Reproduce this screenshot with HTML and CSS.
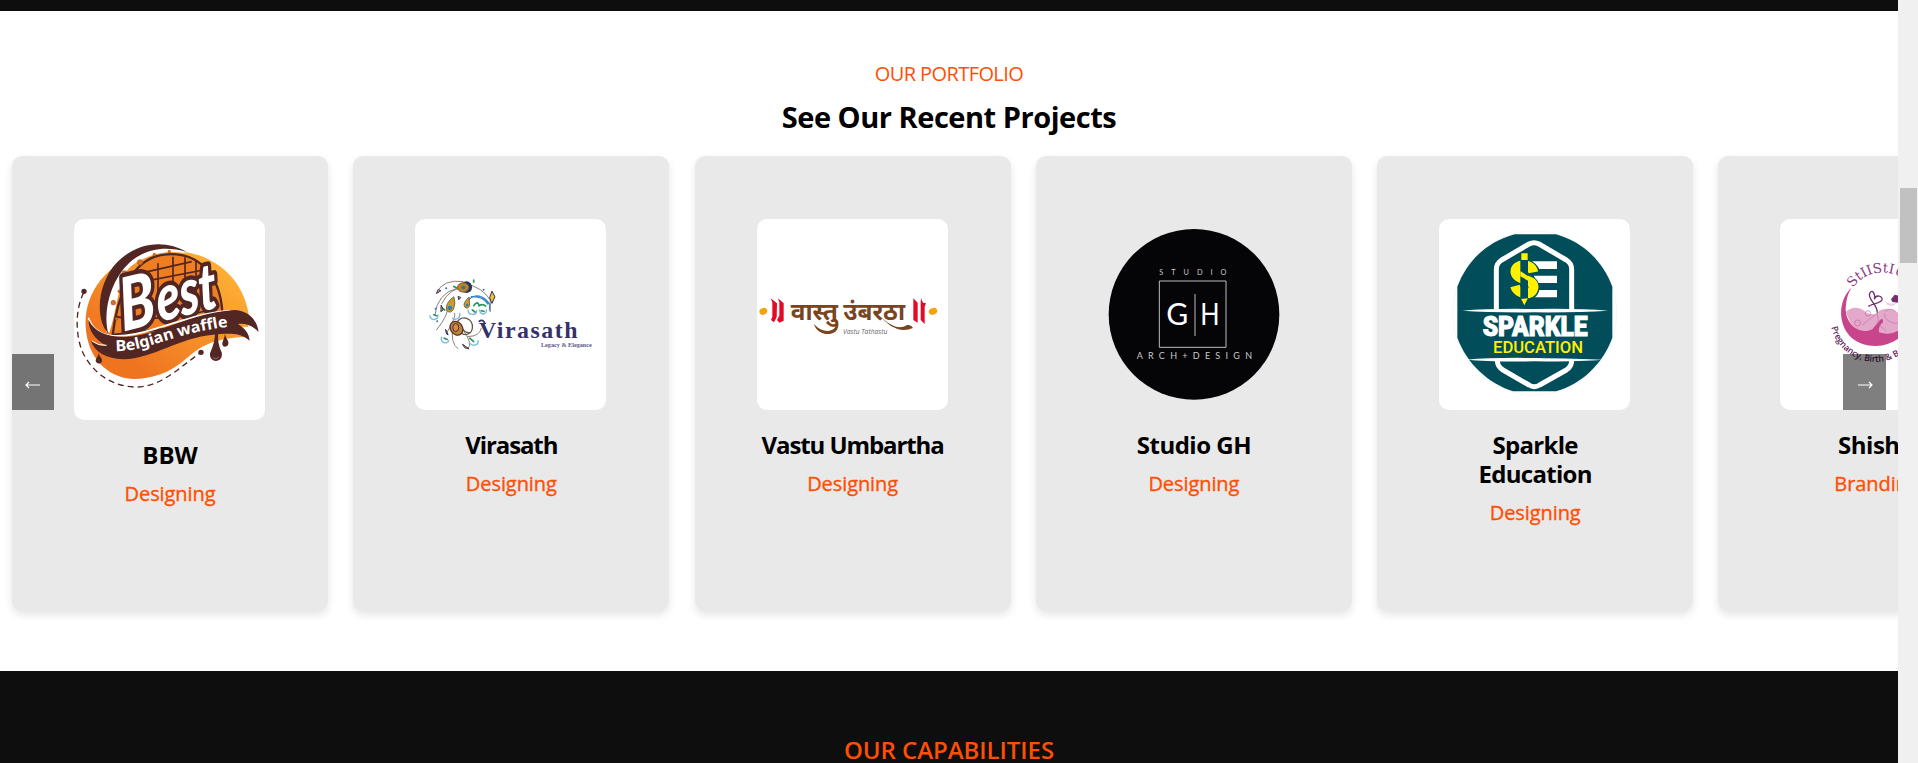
FILE: index.html
```html
<!DOCTYPE html>
<html lang="en">
<head>
<meta charset="utf-8">
<title>Portfolio</title>
<link rel="stylesheet" href="styles.css">
</head>
<body>
<div class="page">
<main class="content">
<div class="strip"></div>
<section class="portfolio">
  <p class="eyebrow">OUR PORTFOLIO</p>
  <h2 class="title">See Our Recent Projects</h2>
  <div class="slider">
    <div class="track">
      <article class="card">
        <svg class="logo logo-tall" viewBox="222 237 573 603">
          <defs>
            <linearGradient id="bw" x1="0" y1="1" x2="1" y2="0"><stop offset=".2" stop-color="#ef7420"/><stop offset=".9" stop-color="#ffb236"/></linearGradient>
            <path id="ribbonText" d="M347 633C440 636 530 575 692 560"/>
          </defs>
          <path fill="url(#bw)" d="M257 560C250 440 350 335 490 332C640 325 735 420 747 530L742 590C650 595 610 610 560 655C510 700 455 717 400 717C320 713 262 650 257 560Z"/>
          <path fill="#fff" d="M318 575C305 440 370 330 480 322C530 320 550 334 560 340C500 330 460 340 420 362C390 375 372 395 366 430C350 470 345 530 328 578Z"/>
          <path fill="#fff" d="M745 560L712 562L740 578L705 582L745 592Z"/>
          <path fill="#522623" d="M325 580C285 540 290 430 352 366C420 298 505 303 560 336C500 318 440 323 388 368C328 425 308 520 325 580Z"/>
          <path fill="#ef7d22" stroke="#522623" stroke-width="7" d="M338 585C350 480 390 350 500 343C600 335 660 410 667 515L510 565Z"/>
          <g fill="none" stroke="#522623" stroke-width="5"><path d="M474 370V500M519 350V500M555 352V480M588 360V470M430 398L575 365M430 425L610 390M350 530C390 540 560 540 650 500"/></g>
          <g fill="#d96d1d" stroke="#a85419" stroke-width="2"><circle cx="420" cy="367" r="8"/><circle cx="374" cy="400" r="8"/><circle cx="340" cy="488" r="7"/><circle cx="358" cy="454" r="4"/><circle cx="463" cy="344" r="4"/><circle cx="508" cy="335" r="4"/><circle cx="349" cy="537" r="4"/></g>
          <g transform="translate(373 574) rotate(-14) skewX(-6)" class="best">
            <text x="-4" y="0" font-size="218" textLength="108" lengthAdjust="spacingAndGlyphs">B</text>
            <text x="108" y="-2" font-size="192" textLength="185" lengthAdjust="spacingAndGlyphs">est</text>
          </g>
          <path fill="none" stroke="#fff" stroke-width="5" d="M265 533C290 605 375 595 470 565S620 517 690 512"/>
          <path fill="#522623" d="M266 540C295 600 380 600 470 572C560 540 620 515 705 510C750 515 770 540 776 576C755 555 735 550 714 552C735 565 747 580 749 602C725 580 690 578 640 584C540 592 460 655 370 658C320 655 285 640 272 601C290 615 305 619 320 617C285 600 265 570 266 540Z"/>
          <path fill="none" stroke="#fff" stroke-width="3" d="M275 603Q295 618 320 616"/>
          <text class="ribbon"><textPath href="#ribbonText" textLength="346" lengthAdjust="spacingAndGlyphs">Belgian waffle</textPath></text>
          <path fill="#522623" d="M645 575H655C652 605 658 620 665 637C672 670 627 672 630 640C638 620 645 605 645 575ZM675 580C676 597 690 604 684 615C678 624 665 621 667 608C670 600 674 592 675 580ZM296 638C298 650 310 657 305 666C300 674 286 671 287 660C290 651 295 650 296 638Z"/>
          <path fill="none" stroke="#c78b7c" stroke-width="2" d="M638 652Q647 661 656 652"/>
          <path class="dash" d="M251 458C225 510 227 580 245 630C275 700 340 742 410 741C490 740 550 670 603 638"/>
          <circle cx="252" cy="454" r="8" fill="#522623"/><circle cx="603" cy="637" r="8" fill="#522623"/>
        </svg>
        <h3 class="name name-loose">BBW</h3><p class="kind">Designing</p>
      </article>
      <article class="card">
        <svg class="logo" viewBox="225 57 576 573">
          <g fill="none" stroke-linecap="round" stroke-width="3">
            <path stroke="#8d7f78" d="M290 278Q310 236 370 244M306 310Q330 262 375 262M375 250Q430 262 452 300V335M285 345Q292 280 350 265M290 390Q330 340 322 320M320 400Q350 350 345 340M340 380Q330 430 355 447M370 390Q400 430 385 447M385 410Q420 410 425 385"/>
            <path stroke="#67564e" stroke-width="4" d="M350 370C365 340 402 355 398 385C394 410 360 410 360 388M368 385Q375 400 390 398"/>
            <path stroke="#3b8ac4" stroke-width="4" d="M385 300Q420 270 450 312V330M395 290Q430 288 445 312"/>
            <path stroke="#74bddd" stroke-width="4" d="M270 347C272 365 296 360 294 345M338 355C350 362 362 355 360 340M385 330C385 347 412 348 411 332M420 330C420 347 443 345 440 330M305 412C300 428 322 436 327 422M390 430C400 442 418 435 415 422"/>
            <path stroke="#27945c" stroke-width="5" d="M342 259L360 268M402 240V246M402 317Q415 300 418 317Q430 310 438 318M305 322L315 330M282 344L290 347M398 330L406 336M425 332L433 334M313 415L322 419M390 415L402 425"/>
          </g>
          <g stroke-width="3">
            <ellipse cx="380" cy="261" rx="17" ry="18" fill="#26315e"/><ellipse cx="370" cy="262" rx="17" ry="14" fill="#bb8228" stroke="#86632c"/><ellipse cx="371" cy="262" rx="6" ry="5" fill="#2876a6"/>
            <path fill="#d6952d" stroke="#697044" d="M342 290Q314 310 321 332Q332 342 341 328Q349 310 342 290ZM388 291Q367 311 375 321Q385 329 390 316Z"/>
            <circle cx="330" cy="324" r="7" fill="#2584ad"/><circle cx="382" cy="315" r="4" fill="#2584ad"/>
            <path fill="#e7c53d" stroke="#392c5a" d="M457 273L450 293L457 310L466 290ZM295 268L303 272L290 280ZM304 315L310 330L303 335ZM368 433L388 447L375 444ZM355 289L363 292L357 299ZM317 388L325 405L320 402Z"/>
            <ellipse cx="350" cy="385" rx="18" ry="22" transform="rotate(-35 350 385)" fill="#c38337" stroke="#543626" stroke-width="4"/><ellipse cx="348" cy="383" rx="9" ry="12" fill="#d68d40" stroke="#3b2e49"/>
          </g>
          <g fill="#3477b5"><circle cx="287" cy="326" r="3"/><circle cx="292" cy="364" r="3"/><circle cx="319" cy="264" r="3"/><circle cx="432" cy="269" r="3"/></g>
          <path fill="none" stroke="#35316b" stroke-width="5" d="M417 365Q432 355 436 373"/>
          <text class="virasath" x="418" y="415" textLength="297">Virasath</text>
          <text class="legacy" x="605" y="441" textLength="153" lengthAdjust="spacingAndGlyphs">Legacy &amp; Elegance</text>
        </svg>
        <h3 class="name name-tight">Virasath</h3><p class="kind">Designing</p>
      </article>
      <article class="card">
        <svg class="logo" viewBox="171 57 573 573">
          <g fill="#f7a20b"><ellipse cx="190" cy="334" rx="12" ry="10" transform="rotate(-20 190 334)"/><ellipse cx="699" cy="334" rx="13" ry="10" transform="rotate(-20 699 334)"/></g>
          <path fill="#e30a26" d="M212 295L231 310L230 352L222 367L213 360L217 350V307ZM234 295L251 310V362L238 368L231 360L238 347V307ZM640 295L653 308V368L640 360V310ZM663 295L669 308L678 310L674 320V372L662 360V308Z"/>
          <text class="vastu" x="272" y="360" textLength="142" lengthAdjust="spacingAndGlyphs">वास्तु</text>
          <text class="vastu" x="430" y="360" textLength="185" lengthAdjust="spacingAndGlyphs">उंबरठा</text>
          <path fill="#78451f" d="M342 371C365 400 407 400 409 370L403 352C423 366 418 398 390 402C362 404 346 388 342 371ZM546 354C580 383 600 388 621 375Q633 373 639 384C600 400 570 380 546 354Z"/>
          <text class="tathastu" x="429" y="402" textLength="133" lengthAdjust="spacingAndGlyphs">Vastu Tathastu</text>
        </svg>
        <h3 class="name name-tight">Vastu Umbartha</h3><p class="kind">Designing</p>
      </article>
      <article class="card">
        <svg class="logo logo-clear" viewBox="54 57 573 573">
          <circle cx="342" cy="343" r="256" fill="#050507"/>
          <g fill="none" stroke="#bcbcbd" stroke-width="3"><path d="M238 243H438V442H238ZM345 282V408"/></g>
          <text class="gh-small" x="238" y="225" font-size="22" textLength="201">STUDIO</text>
          <text class="gh-small" x="170" y="478" font-size="27" textLength="346">ARCH+DESIGN</text>
          <text class="gh-big" x="259" y="376" textLength="66" lengthAdjust="spacingAndGlyphs">G</text>
          <text class="gh-big" x="361" y="376" textLength="58" lengthAdjust="spacingAndGlyphs">H</text>
        </svg>
        <h3 class="name">Studio GH</h3><p class="kind">Designing</p>
      </article>
      <article class="card">
        <svg class="logo" viewBox="60 57 573 573">
          <circle cx="347" cy="339" r="246" fill="#fff" stroke="#f0f2f2" stroke-width="2"/>
          <path fill="#014e5a" d="M287 103H411C490 126 550 180 580 260V413C550 493 490 550 411 574H282C210 550 145 495 115 413V260C145 180 205 126 287 103Z"/>
          <path fill="none" stroke="#fff" stroke-width="15" d="M232 328V208Q232 190 248 180L330 132Q345 124 360 132L442 180Q458 190 458 208V328M235 481Q235 500 252 510L330 555Q346 565 362 555L442 510Q458 500 458 481"/>
          <path fill="#fff" d="M130 332Q210 325 348 327Q480 325 567 332Q480 338 348 337Q210 338 130 332ZM143 479Q220 472 348 474T550 479Q480 485 348 484Q210 486 143 479ZM340 184H414V207H352ZM345 227H414V249H350ZM345 270H414V292H345Z"/>
          <path fill="none" stroke="#014e5a" stroke-width="36" d="M345 217C335 187 289 192 292 216C296 242 344 235 344 264C340 292 300 288 282 262"/>
          <path fill="none" stroke="#fff100" stroke-width="29" d="M343 217C338 187 288 190 289 216C292 244 345 234 344 262C341 290 296 285 288 258"/>
          <path fill="#014e5a" d="M304 180H327V294H304Z"/><path fill="#fff100" d="M307 160H326V180H307ZM306 296H326L316 316ZM304 213L327 228V242L304 229Z"/>
          <text class="sparkle" x="191" y="409" textLength="315" lengthAdjust="spacingAndGlyphs">SPARKLE</text>
          <text class="education" x="222" y="458" textLength="270" lengthAdjust="spacingAndGlyphs">EDUCATION</text>
        </svg>
        <h3 class="name name-snug">Sparkle Education</h3><p class="kind">Designing</p>
      </article>
      <article class="card">
        <svg class="logo" viewBox="273 237 573 573">
          <defs><path id="topArc" d="M491 444A112 112 0 0 1 680 455"/><path id="lowArc" d="M427 562A136 134 0 0 0 692 562"/></defs>
          <circle cx="560" cy="515" r="90" fill="#fff"/>
          <path fill="#e3a8ca" d="M471 515Q500 490 533 518Q560 530 570 512Q600 498 630 520L670 540Q650 590 560 585Q490 585 471 515Z"/>
          <path fill="#c8458b" d="M488 443C433 490 445 617 560 618C620 618 665 570 665 540C630 580 600 588 570 577Q567 560 582 547Q583 532 573 540L550 568C520 585 470 560 470 505Q472 465 488 443Z"/>
          <g fill="none" stroke="#733071" stroke-width="4"><path d="M565 518C565 490 535 480 542 460C550 445 560 463 556 478C560 462 582 467 579 480C575 490 552 490 538 499"/><path stroke="#bd76aa" stroke-width="2" d="M520 555Q550 530 565 520M565 520L568 550M585 520Q590 550 625 550M588 515Q605 500 620 515M570 555L590 572"/><circle cx="506" cy="549" r="9" stroke="#c16ca8" stroke-width="2"/><circle cx="537" cy="520" r="8" stroke="#c16ca8" stroke-width="2"/><path stroke="#d2aacb" stroke-width="2" d="M590 484Q605 505 620 490M592 492H616"/></g>
          <path fill="#733071" d="M606 478L617 464L640 470V490L610 486Z"/>
          <text class="shish-top"><textPath href="#topArc" textLength="218" lengthAdjust="spacingAndGlyphs">StIIStIUVI</textPath></text>
          <text class="shish-low"><textPath href="#lowArc" textLength="335" lengthAdjust="spacingAndGlyphs">Pregnancy, Birth &amp; Beyond</textPath></text>
        </svg>
        <h3 class="name">Shishu</h3><p class="kind">Branding</p>
      </article>
    </div>
    <button class="nav prev" aria-label="Previous"><svg viewBox="0 0 16 8"><path d="M1 4H15M4 1L1 4L4 7"/></svg></button>
    <button class="nav next" aria-label="Next"><svg viewBox="0 0 16 8"><path d="M1 4H15M12 1L15 4L12 7"/></svg></button>
  </div>
</section>
<section class="capabilities"><h2 class="cap-title">OUR CAPABILITIES</h2></section>
</main>
<aside class="scrollbar"><div class="thumb"></div></aside>
</div>
</body>
</html>
```
FILE: styles.css
```css
* { box-sizing: border-box; }
body { margin: 0; background: #fff; font-family: "Open Sans", "Noto Sans", sans-serif; color: #000; overflow: hidden; }
h2, h3, p { margin: 0; }
.page { display: flex; width: 1918px; height: 763px; overflow: hidden; }
.content { width: 1898px; height: 763px; overflow: hidden; }
.strip { height: 11px; background: #0e0e0e; }
.portfolio { height: 660px; padding-top: 51px; text-align: center; }
.eyebrow { font-size: 20px; line-height: 24px; font-weight: 400; color: #ff4f03; letter-spacing: -0.6px; }
.title { margin-top: 13px; font-size: 29px; line-height: 36px; font-weight: 700; letter-spacing: -0.47px; }
.slider { position: relative; margin-top: 21px; }
.track { display: flex; gap: 25.3px; padding-left: 12px; height: 455px; }
.card { flex: 0 0 316px; height: 455px; padding: 63px 62px 0; border-radius: 10px; background: #e9e9e9; box-shadow: 0 4px 8px rgba(0, 0, 0, .1); }
.logo { display: block; width: 191px; height: 191px; border-radius: 10px; background: #fff; }
.logo-tall { height: 201px; }
.logo-clear { background: none; }
.name { margin-top: 20px; font-size: 24px; line-height: 29px; font-weight: 700; letter-spacing: -0.5px; }
.name-loose { letter-spacing: 0; }
.name-snug { letter-spacing: -0.7px; }
.name-tight { letter-spacing: -1.1px; }
.kind { margin-top: 13px; font-size: 20px; line-height: 24px; font-weight: 500; color: #ff4f03; letter-spacing: -0.08px; -webkit-text-stroke: 0.35px #ff4f03; }
.nav { position: absolute; top: 198.4px; height: 55.2px; padding: 0; border: 0; background: rgba(0, 0, 0, .5); display: flex; align-items: center; justify-content: center; }
.nav svg { width: 16px; height: 8px; margin-top: 7px; fill: none; stroke: #fff; stroke-width: 1.2; }
.prev { left: 12px; width: 42px; }
.next { left: 1843px; width: 43px; }
.capabilities { height: 92px; padding-top: 64px; background: #0e0e0e; text-align: center; }
.cap-title { font-size: 24px; line-height: 29px; font-weight: 600; color: #ff4f03; letter-spacing: -0.05px; }
.scrollbar { width: 20px; height: 763px; background: #f0f0f0; padding: 188px 1px 0 2px; }
.thumb { height: 75px; background: #c1c1c1; }
.best { font-family: Lato, sans-serif; font-weight: 900; font-style: italic; fill: #fff; stroke: #522623; stroke-width: 26px; stroke-linejoin: round; paint-order: stroke; }
.ribbon { font: 700 46px "Noto Sans", sans-serif; fill: #fff; }
.dash { fill: none; stroke: #522623; stroke-width: 4px; stroke-dasharray: 18 12; }
.virasath { font: 700 72px "Liberation Serif", serif; fill: #35316b; }
.legacy { font: 700 21px "Liberation Serif", serif; fill: #5b578a; }
.vastu { font: 700 70px "Noto Sans Devanagari", "Noto Sans", sans-serif; fill: #78451f; }
.tathastu { font: italic 20px "Open Sans", sans-serif; fill: #666; }
.gh-small { font-family: Lato, sans-serif; fill: #c9c9ca; }
.gh-big { font: 400 90px Lato, sans-serif; fill: #fff; }
.sparkle { font: 900 81px Roboto, sans-serif; fill: #fff; stroke: #fff; stroke-width: 3px; }
.education { font: 500 51px Roboto, sans-serif; fill: #fff100; }
.shish-top { font: 400 40px "DejaVu Serif", serif; fill: #8a3c86; }
.shish-low { font: 600 27px "Open Sans", sans-serif; fill: #65255f; }
```
